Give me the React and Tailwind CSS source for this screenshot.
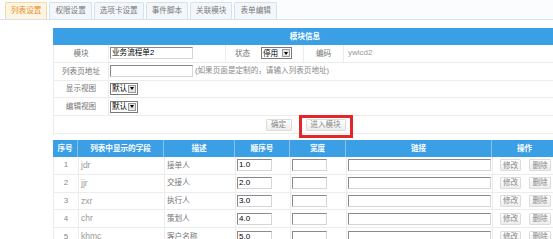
const tabs = ["列表设置", "权限设置", "选项卡设置", "事件脚本", "关联模块", "表单编辑"]

const rows = [
  { no: 1, field: "jdr", desc: "接单人", order: "1.0" },
  { no: 2, field: "jjr", desc: "交接人", order: "2.0" },
  { no: 3, field: "zxr", desc: "执行人", order: "3.0" },
  { no: 4, field: "chr", desc: "策划人", order: "4.0" },
  { no: 5, field: "khmc", desc: "客户名称", order: "5.0" },
]

const inputCls =
  "h-[12px] border border-t-[#8a8a8a] border-l-[#8a8a8a] border-r-[#d6d6d6] border-b-[#d6d6d6] bg-white px-[1px] text-[7.6px] leading-[10px] text-black whitespace-nowrap"

function FakeSelect({ value, w }) {
  return (
    <div className={`flex h-[12px] ${w} items-center overflow-hidden whitespace-nowrap border border-[#7a7a7a] bg-white`}>
      <span className="flex-1 pl-[1px] text-[7.6px] leading-none text-black">{value}</span>
      <span className="mr-[1px] flex h-[8px] w-[8px] shrink-0 items-center justify-center border border-[#9a9a9a] bg-[#e4e4e4]">
        <span className="h-0 w-0 border-x-[2.5px] border-t-[3px] border-x-transparent border-t-black" />
      </span>
    </div>
  )
}

function SmallBtn({ children, w }) {
  return (
    <span
      className={`flex h-[12px] ${w} items-center justify-center whitespace-nowrap rounded-[1px] border border-[#dcdcdc] bg-gradient-to-b from-white to-[#ededed] text-[7.6px] leading-none text-[#888]`}
    >
      {children}
    </span>
  )
}

export default function App() {
  return (
    <div
      className="h-[239px] w-[553px] overflow-hidden bg-white text-[7.6px] text-[#777]"
      style={{ fontFamily: '"Liberation Sans", "Noto Sans CJK SC", sans-serif' }}
    >
      {/* tabs */}
      <div className="flex h-[20px] items-end gap-[2px] border-b border-[#d6e2ee] bg-[#fbfcfe] pl-[5px]">
        {tabs.map((t, i) => (
          <div
            key={t}
            className={
              i === 0
                ? "flex h-[17px] items-center rounded-t-[2px] border border-b-0 border-[#f2d9a6] bg-[#fdf4e1] px-[5px] text-[#e5902e]"
                : "flex h-[17px] items-center rounded-t-[2px] border border-b-0 border-[#d4e2ee] bg-[#f3f7fb] px-[5px] text-[#7a7a7a]"
            }
          >
            {t}
          </div>
        ))}
      </div>

      {/* module info */}
      <div className="ml-[53px] mt-[8px] w-[504px]">
        <div className="flex h-[17px] items-center justify-center bg-[#3b9fe6] font-bold text-white">模块信息</div>
        <div className="border-l border-[#ececec]">
          <div className="grid h-[17.8px] grid-cols-[55px_117px_33px_45px_40px_1fr] items-center border-b border-[#ececec]">
            <span className="flex h-full items-center justify-center border-r border-[#ececec]">模块</span>
            <span className="flex h-full items-center border-r border-[#ececec] pl-[1px]">
              <span className={`${inputCls} w-[83px]`}>业务流程单2</span>
            </span>
            <span className="flex h-full items-center justify-center">状态</span>
            <span className="flex h-full items-center border-r border-[#ececec] pl-[2px]">
              <FakeSelect value="停用" w="w-[31px]" />
            </span>
            <span className="flex h-full items-center justify-center border-r border-[#ececec]">编码</span>
            <span className="pl-[4px] text-[8px] text-[#999]">ywlcd2</span>
          </div>
          <div className="grid h-[17.8px] grid-cols-[55px_1fr] items-center border-b border-[#ececec]">
            <span className="flex h-full items-center justify-center border-r border-[#ececec]">列表页地址</span>
            <span className="flex items-center gap-[2px] pl-[1px]">
              <span className={`${inputCls} w-[83px]`} />
              <span className="text-[#888]">(如果页面是定制的，请输入列表页地址)</span>
            </span>
          </div>
          <div className="grid h-[17.8px] grid-cols-[55px_1fr] items-center border-b border-[#ececec]">
            <span className="flex h-full items-center justify-center border-r border-[#ececec]">显示视图</span>
            <span className="pl-[1px]">
              <FakeSelect value="默认" w="w-[28px]" />
            </span>
          </div>
          <div className="grid h-[17.8px] grid-cols-[55px_1fr] items-center border-b border-[#ececec]">
            <span className="flex h-full items-center justify-center border-r border-[#ececec]">编辑视图</span>
            <span className="pl-[1px]">
              <FakeSelect value="默认" w="w-[28px]" />
            </span>
          </div>
          <div className="flex h-[17.8px] items-center justify-center gap-[14px] border-b border-[#ececec] pt-[1px]">
            <SmallBtn w="w-[26px]">确定</SmallBtn>
            <span className="relative">
              <SmallBtn w="w-[40px]">进入模块</SmallBtn>
              <span className="absolute -bottom-[7px] -left-[7px] -right-[7px] -top-[4px] border-[3px] border-[#e4262a]" />
            </span>
          </div>
        </div>

        {/* field table */}
        <div className="mt-[6px]">
          <div className="grid h-[17px] grid-cols-[25px_86px_71px_55px_56px_146px_1fr] bg-[#3b9fe6] font-bold text-white">
            {["序号", "列表中显示的字段", "描述", "顺序号", "宽度", "链接", "操作"].map((h, i) => (
              <span
                key={h}
                className={`flex items-center justify-center ${i < 6 ? "border-r border-[#86c3f0]" : ""}`}
              >
                {h}
              </span>
            ))}
          </div>
          {rows.map((r) => (
            <div
              key={r.no}
              className="grid h-[17.8px] grid-cols-[25px_86px_71px_55px_56px_146px_1fr] border-b border-l border-[#ececec]"
            >
              <span className="flex items-center justify-center border-r border-[#ececec] text-[8px] text-[#888]">
                {r.no}
              </span>
              <span className="flex items-center border-r border-[#ececec] pl-[2px] text-[8.5px] text-[#999]">
                {r.field}
              </span>
              <span className="flex items-center border-r border-[#ececec] pl-[2px]">{r.desc}</span>
              <span className="flex items-center border-r border-[#ececec] pl-[1px]">
                <span className={`${inputCls} w-[35px] text-[8px]`}>{r.order}</span>
              </span>
              <span className="flex items-center border-r border-[#ececec] pl-[1px]">
                <span className={`${inputCls} w-[35px]`} />
              </span>
              <span className="flex items-center border-r border-[#ececec] pl-[1px]">
                <span className={`${inputCls} w-[143px]`} />
              </span>
              <span className="flex items-center gap-[8px] pl-[7px]">
                <SmallBtn w="w-[21px]">修改</SmallBtn>
                <SmallBtn w="w-[22px]">删除</SmallBtn>
              </span>
            </div>
          ))}
        </div>
      </div>
    </div>
  )
}
